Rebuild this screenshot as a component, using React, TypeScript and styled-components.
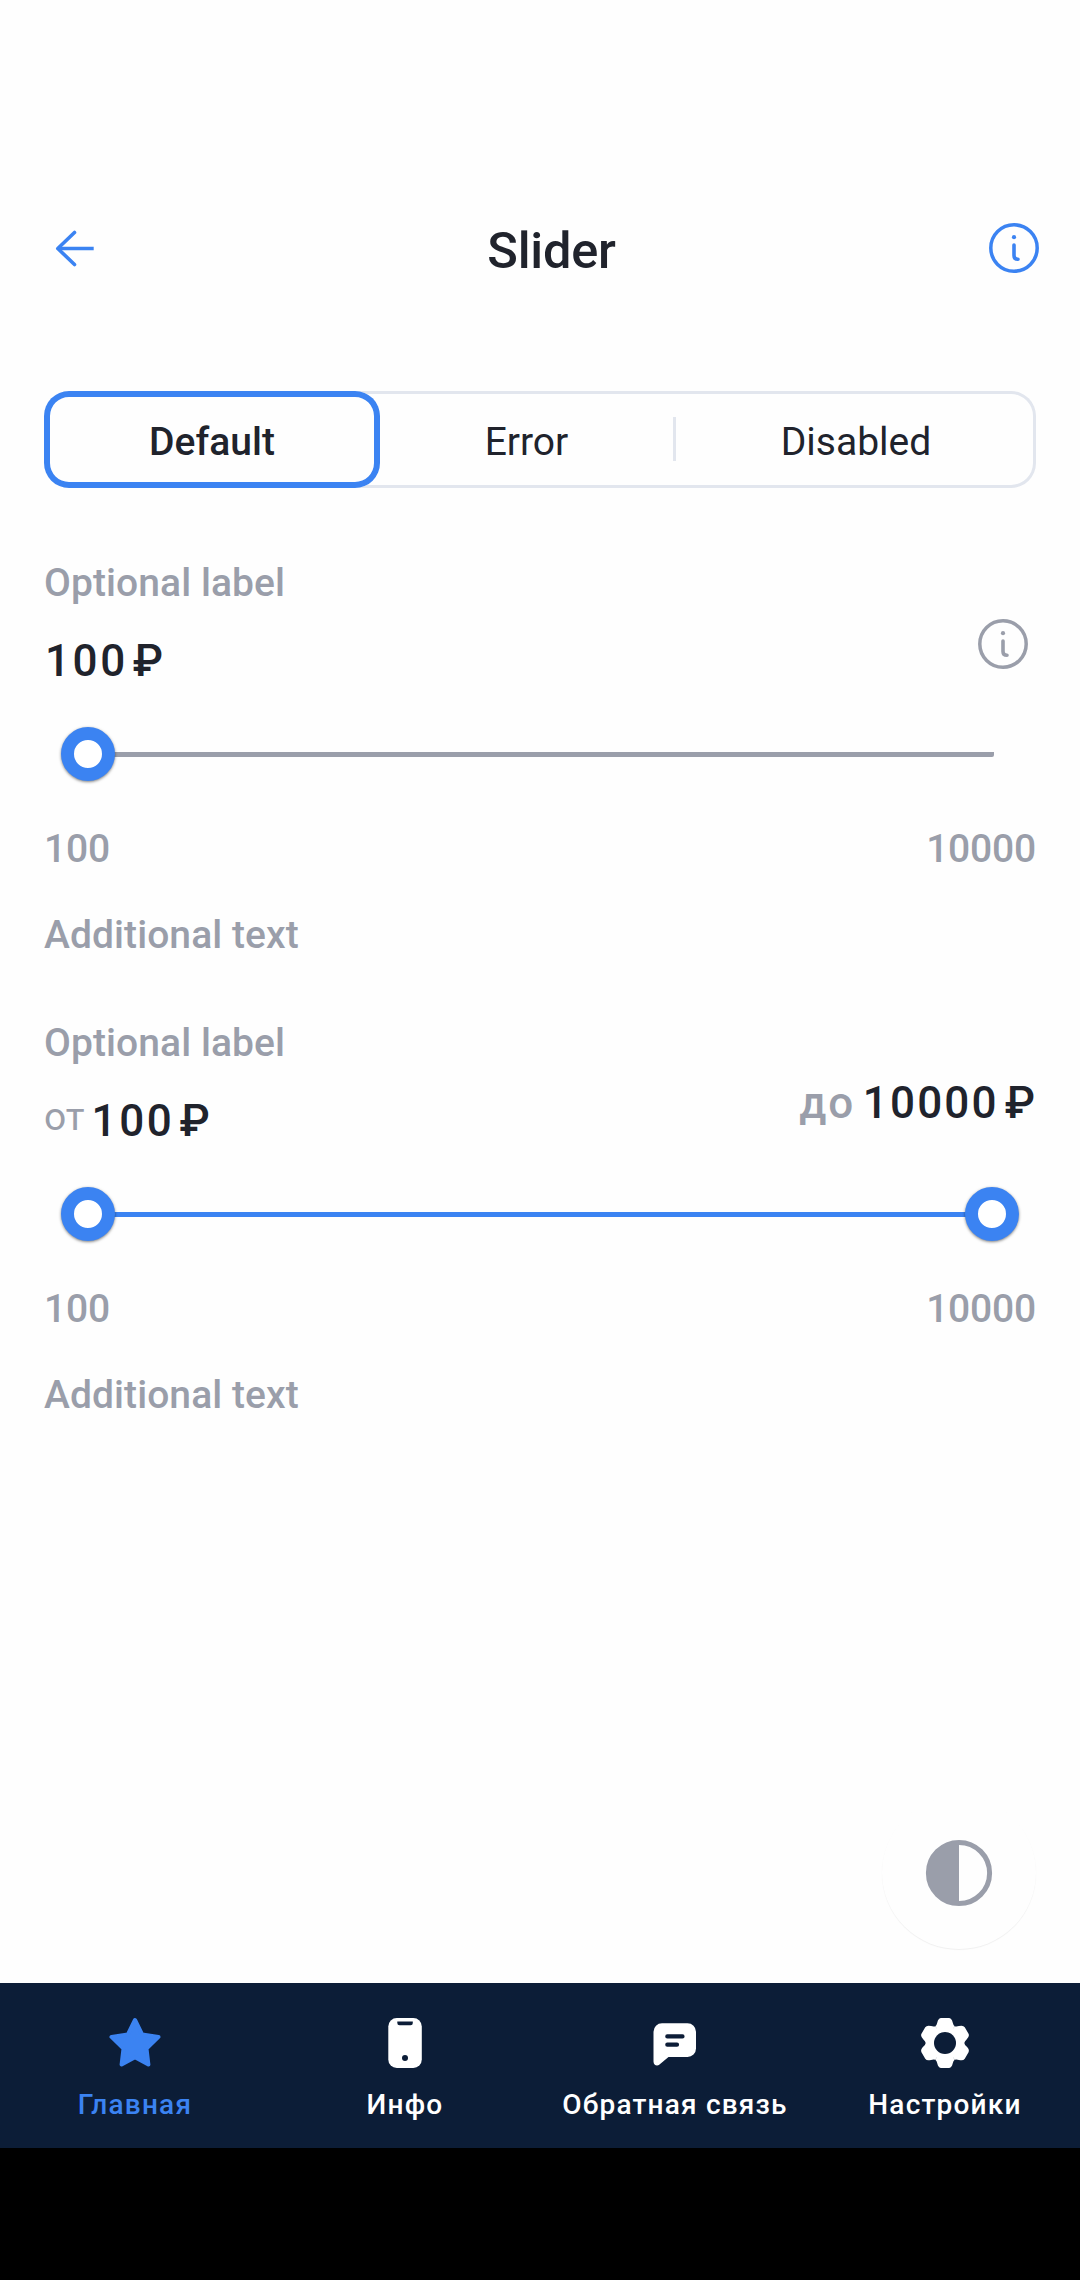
import React from 'react';
import styled, { createGlobalStyle } from 'styled-components';

const color = {
  page: '#fefefe',
  accent: '#3b83f2',
  text: '#20232c',
  muted: '#9a9eaa',
  border: '#e2e6ee',
  nav: '#0c1d37',
};

const GlobalStyle = createGlobalStyle`
  body {
    margin: 0;
    background: ${color.page};
    font-family: Roboto, 'Liberation Sans', sans-serif;
    color: ${color.text};
  }
  *, *::before, *::after { box-sizing: border-box; }
  button { font: inherit; color: inherit; background: none; border: 0; padding: 0; }
  svg { display: block; }
`;

const Screen = styled.div`
  display: flex;
  flex-direction: column;
  width: 1080px;
  height: 2280px;
  overflow: hidden;
`;

const Header = styled.header`
  display: flex;
  align-items: center;
  height: 160px;
  margin-top: 168px;
  padding: 0 36px 0 45px;
`;

const Title = styled.h1`
  flex: 1;
  margin: 0;
  padding: 6px 0 0 14px;
  text-align: center;
  font-size: 50.5px;
  font-weight: 500;
  line-height: 60px;
  letter-spacing: -0.2px;
`;

const Main = styled.main`
  flex: 1;
  display: flex;
  flex-direction: column;
  padding: 63px 44px 34px;
`;

const Segments = styled.div`
  display: grid;
  grid-template-columns: 336px 296px 1fr;
  height: 97px;
  border-radius: 25px;
  box-shadow: inset 0 0 0 3px ${color.border};
`;

const Segment = styled.button`
  display: flex;
  align-items: center;
  justify-content: center;
  padding-top: 5px;
  font-size: 39px;
  line-height: 46px;
  font-weight: 400;
`;

const SelectedSegment = styled(Segment)`
  font-weight: 500;
  border-radius: 25px;
  background: ${color.page};
  box-shadow: inset 0 0 0 6px ${color.accent};
`;

const DividedSegment = styled(Segment)`
  padding-right: 3px;
  background: linear-gradient(${color.border}, ${color.border}) 100% 26px / 3px 44px no-repeat;
`;

const Field = styled.section<{ $first?: boolean }>`
  height: 399px;
  margin-top: ${(p) => (p.$first ? 72 : 61)}px;
`;

const FieldHead = styled.div`
  display: flex;
  justify-content: space-between;
  align-items: flex-start;
  height: 127px;
`;

const Caption = styled.div`
  font-size: 39px;
  font-weight: 500;
  line-height: 47px;
  letter-spacing: 0.08px;
  color: ${color.muted};
`;

const Currency = styled.span`
  margin-left: 5px;
  letter-spacing: 0;
`;

const Value = styled.div`
  display: flex;
  align-items: center;
  font-size: 44px;
  font-weight: 500;
  line-height: 53px;
`;

const StartValue = styled(Value)`
  margin-top: 28px;
  padding-left: 1px;
  letter-spacing: 2.6px;
`;

const EndValue = styled(Value)`
  margin-top: 57px;
  padding-right: 1px;
  letter-spacing: 2.2px;

  ${Currency} {
    margin-left: 6px;
  }
`;

const ToPrefix = styled.span`
  margin-right: 8px;
  letter-spacing: 1.6px;
  color: ${color.muted};
`;

const FromPrefix = styled.span`
  margin: 0 7px 8px -1px;
  font-size: 39px;
  font-weight: 400;
  line-height: 45px;
  letter-spacing: 0;
  color: ${color.muted};
`;

const HintButton = styled.button`
  margin: 54px 3px 0 0;
`;

const Slider = styled.div`
  position: relative;
  display: flex;
  align-items: center;
  height: 54px;
  margin: 40px 44px 0;
`;

const Rail = styled.div<{ $active?: boolean }>`
  flex: 1;
  height: 5px;
  margin: 1px -2px 0 0;
  border-radius: 0 0 2px 0;
  background: ${(p) => (p.$active ? color.accent : color.muted)};
`;

const Thumb = styled.div`
  position: absolute;
  top: 0;
  width: 54px;
  height: 54px;
  margin-left: -27px;
  border: 13px solid ${color.accent};
  border-radius: 50%;
  background: #fff;
  box-shadow: 0 1px 3px rgba(0, 0, 0, 0.5);
`;

const Limits = styled(Caption)`
  display: flex;
  justify-content: space-between;
  margin: 45px 0 39px;
  letter-spacing: -0.2px;
`;

const ThemeButton = styled.button`
  display: grid;
  place-items: center;
  width: 154px;
  height: 153px;
  margin: auto 0 0 auto;
  border-radius: 50%;
  background: ${color.page};
  box-shadow: 0 1px 1px rgba(0, 0, 0, 0.06);
`;

const NavBar = styled.nav`
  display: grid;
  grid-template-columns: repeat(4, 1fr);
  height: 165px;
  background: ${color.nav};
`;

const NavItem = styled.button<{ $active?: boolean }>`
  display: flex;
  flex-direction: column;
  align-items: center;
  gap: 16px;
  padding-top: 30px;
  color: ${(p) => (p.$active ? color.accent : '#fff')};
  font-size: 28px;
  font-weight: 500;
  line-height: 32px;
  letter-spacing: 1.2px;
  white-space: nowrap;
`;

const SystemBar = styled.div`
  height: 132px;
  background: #000;
`;

const BackIcon = () => (
  <svg width="60" height="60" fill="none" stroke={color.accent} strokeWidth="3.6" strokeLinecap="round" strokeLinejoin="round">
    <path d="M29.5 14.5 12.8 30.5l16.7 16" />
    <path d="M13.5 30.5H48.7" strokeLinecap="butt" />
  </svg>
);

const InfoIcon = ({ stroke }: { stroke: string }) => (
  <svg width="60" height="60" fill="none" stroke={stroke} strokeLinecap="round">
    <circle cx="30" cy="30" r="23.2" strokeWidth="3.5" />
    <circle cx="30" cy="19.2" r="2.1" fill={stroke} stroke="none" />
    <path d="M30 27v10.5Q30 41.3 34 41.3" strokeWidth="3.6" />
  </svg>
);

const ContrastIcon = () => (
  <svg width="70" height="70">
    <circle cx="35" cy="35" r="30.6" fill="none" stroke={color.muted} strokeWidth="5" />
    <path d="M35 3a32 32 0 0 0 0 64z" fill={color.muted} />
  </svg>
);

const StarIcon = () => (
  <svg width="60" height="60" fill="currentColor" stroke="currentColor" strokeWidth="4" strokeLinejoin="round">
    <path d="m30 7 7.2 14.6 16.3 2.3-12 11.6 1.9 16L30 44.2l-13.4 7.3 1.9-16-12-11.6 16.3-2.3z" />
  </svg>
);

const PhoneIcon = () => (
  <svg width="60" height="60">
    <rect x="13.3" y="5" width="33.5" height="50" rx="8.5" fill="currentColor" />
    <path d="M22.3 8.4h15.5v1.6a2.2 2.2 0 0 1-2.2 2.2H24.5a2.2 2.2 0 0 1-2.2-2.2z" fill={color.nav} />
    <circle cx="30" cy="45" r="3" fill={color.nav} />
  </svg>
);

const ChatIcon = () => (
  <svg width="60" height="60">
    <path
      d="M17 10.3H42.5a8.5 8.5 0 0 1 8.5 8.5V35.5a8.5 8.5 0 0 1-8.5 8.5H23.5L14.5 51.5c-2.3 1.9-6 .8-6-3V18.8a8.5 8.5 0 0 1 8.5-8.5z"
      fill="currentColor"
    />
    <path d="M22.3 23.4H37.5M22.3 31.7H32" stroke={color.nav} strokeWidth="4.2" strokeLinecap="round" />
  </svg>
);

const GEAR_ANGLES = [0, 60, 120, 180, 240, 300];

const GearIcon = () => (
  <svg width="60" height="60">
    <g transform="translate(30 30)" fill="currentColor">
      {GEAR_ANGLES.map((angle) => (
        <path
          key={angle}
          transform={`rotate(${angle})`}
          d="M0 0-9.7-16.7Q-8.2-18-7.7-20.5Q-6.7-24.8-3.8-25H3.8Q6.7-24.8 7.7-20.5Q8.2-18 9.7-16.7z"
        />
      ))}
      <circle r="17" />
    </g>
    <circle cx="30" cy="30" r="11" fill={color.nav} />
  </svg>
);

const SliderControl = ({ thumbs, active }: { thumbs: number[]; active?: boolean }) => (
  <Slider>
    <Rail $active={active} />
    {thumbs.map((pos) => (
      <Thumb key={pos} style={{ left: `${pos}%` }} />
    ))}
  </Slider>
);

export default function App() {
  return (
    <>
      <GlobalStyle />
      <Screen>
        <Header>
          <button aria-label="Back">
            <BackIcon />
          </button>
          <Title>Slider</Title>
          <button aria-label="Info">
            <InfoIcon stroke={color.accent} />
          </button>
        </Header>
        <Main>
          <Segments>
            <SelectedSegment>Default</SelectedSegment>
            <DividedSegment>Error</DividedSegment>
            <Segment>Disabled</Segment>
          </Segments>

          <Field $first>
            <FieldHead>
              <div>
                <Caption>Optional label</Caption>
                <StartValue>
                  100<Currency>₽</Currency>
                </StartValue>
              </div>
              <HintButton aria-label="Hint">
                <InfoIcon stroke={color.muted} />
              </HintButton>
            </FieldHead>
            <SliderControl thumbs={[0]} />
            <Limits>
              <span>100</span>
              <span>10000</span>
            </Limits>
            <Caption>Additional text</Caption>
          </Field>

          <Field>
            <FieldHead>
              <div>
                <Caption>Optional label</Caption>
                <StartValue>
                  <FromPrefix>от</FromPrefix>100<Currency>₽</Currency>
                </StartValue>
              </div>
              <EndValue>
                <ToPrefix>до</ToPrefix>10000<Currency>₽</Currency>
              </EndValue>
            </FieldHead>
            <SliderControl thumbs={[0, 100]} active />
            <Limits>
              <span>100</span>
              <span>10000</span>
            </Limits>
            <Caption>Additional text</Caption>
          </Field>

          <ThemeButton aria-label="Theme">
            <ContrastIcon />
          </ThemeButton>
        </Main>
        <NavBar>
          <NavItem $active>
            <StarIcon />
            Главная
          </NavItem>
          <NavItem>
            <PhoneIcon />
            Инфо
          </NavItem>
          <NavItem>
            <ChatIcon />
            Обратная связь
          </NavItem>
          <NavItem>
            <GearIcon />
            Настройки
          </NavItem>
        </NavBar>
        <SystemBar />
      </Screen>
    </>
  );
}
